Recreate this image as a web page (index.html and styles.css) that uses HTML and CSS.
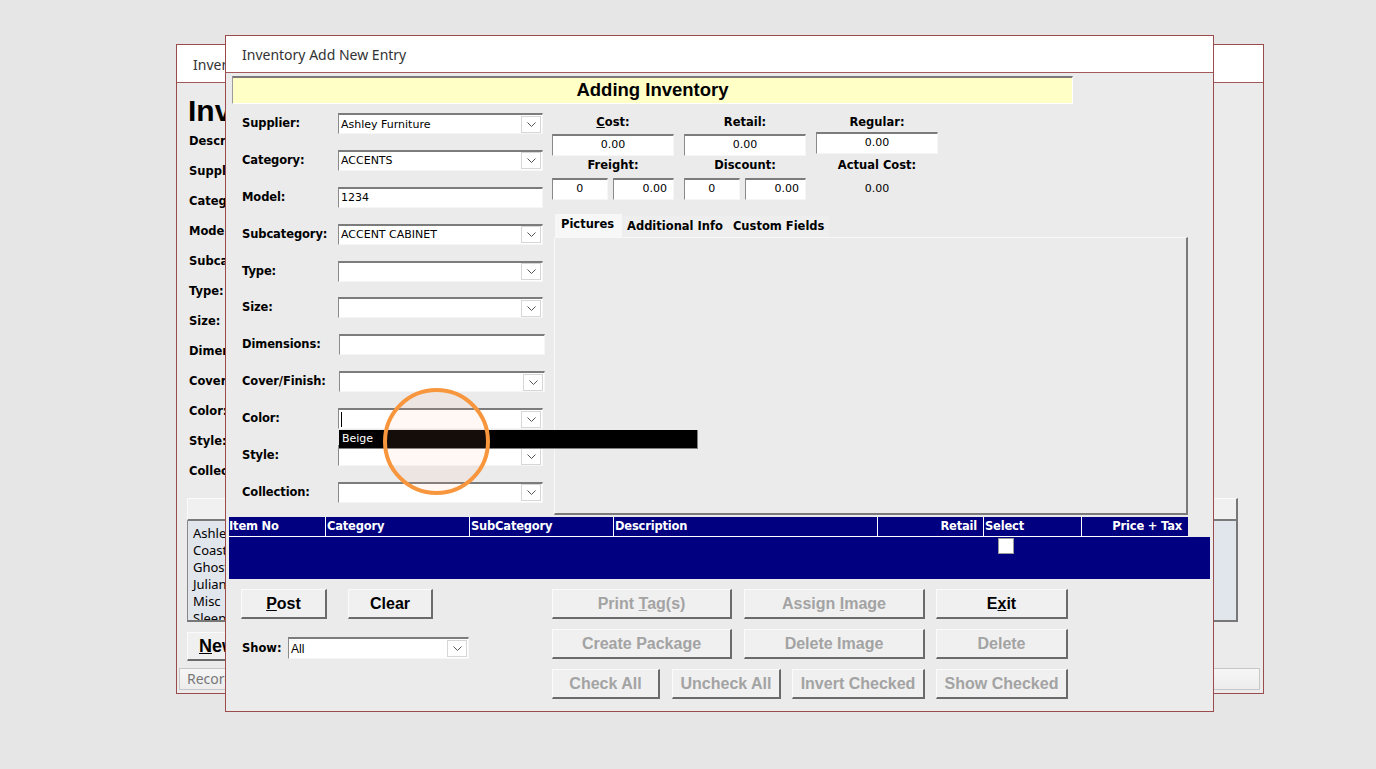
FILE: index.html
```html
<!DOCTYPE html>
<html lang="en">
<head>
    <meta charset="UTF-8">
    <meta name="viewport" content="width=device-width, initial-scale=1.0">
    <title>Inventory Add New Entry</title>
    <link rel="stylesheet" href="styles.css">
</head>
<body>
    <div class="desk">

        <!-- window behind: inventory list -->
        <div class="win back">
            <div class="titlebar">Inventory</div>
            <div class="back-body">
                <div class="big">Inventory</div>
                <div class="back-labels">
                    <div>Description:</div>
                    <div>Supplier:</div>
                    <div>Category:</div>
                    <div>Model:</div>
                    <div>Subcategory:</div>
                    <div>Type:</div>
                    <div>Size:</div>
                    <div>Dimensions:</div>
                    <div>Cover/Finish:</div>
                    <div>Color:</div>
                    <div>Style:</div>
                    <div>Collection:</div>
                </div>
                <div class="back-bar"></div>
                <div class="back-list">
                    <div>Ashley Furniture</div>
                    <div>Coaster</div>
                    <div>Ghost</div>
                    <div>Julian</div>
                    <div>Misc</div>
                    <div>Sleep</div>
                </div>
                <button class="back-new"><u>N</u>ew</button>
                <div class="back-status">Record</div>
            </div>
        </div>

        <!-- front window -->
        <div class="win front">
            <div class="titlebar">Inventory Add New Entry</div>
            <div class="front-body">
                <div class="heading">Adding Inventory</div>

                <div class="main">
                    <div class="fields">
                        <label>Supplier:</label>
                        <div class="combo"><span class="val">Ashley Furniture</span><span class="drop"><svg width="9" height="5" viewBox="0 0 9 5"><polyline points="0.5,0.5 4.5,4.5 8.5,0.5" fill="none" stroke="#555" stroke-width="1"/></svg></span></div>

                        <label>Category:</label>
                        <div class="combo"><span class="val">ACCENTS</span><span class="drop"><svg width="9" height="5" viewBox="0 0 9 5"><polyline points="0.5,0.5 4.5,4.5 8.5,0.5" fill="none" stroke="#555" stroke-width="1"/></svg></span></div>

                        <label>Model:</label>
                        <div class="combo"><span class="val">1234</span></div>

                        <label>Subcategory:</label>
                        <div class="combo"><span class="val">ACCENT CABINET</span><span class="drop"><svg width="9" height="5" viewBox="0 0 9 5"><polyline points="0.5,0.5 4.5,4.5 8.5,0.5" fill="none" stroke="#555" stroke-width="1"/></svg></span></div>

                        <label>Type:</label>
                        <div class="combo"><span class="val"></span><span class="drop"><svg width="9" height="5" viewBox="0 0 9 5"><polyline points="0.5,0.5 4.5,4.5 8.5,0.5" fill="none" stroke="#555" stroke-width="1"/></svg></span></div>

                        <label>Size:</label>
                        <div class="combo"><span class="val"></span><span class="drop"><svg width="9" height="5" viewBox="0 0 9 5"><polyline points="0.5,0.5 4.5,4.5 8.5,0.5" fill="none" stroke="#555" stroke-width="1"/></svg></span></div>

                        <label>Dimensions:</label>
                        <div class="combo shifted"><span class="val"></span></div>

                        <label>Cover/Finish:</label>
                        <div class="combo shifted"><span class="val"></span><span class="drop"><svg width="9" height="5" viewBox="0 0 9 5"><polyline points="0.5,0.5 4.5,4.5 8.5,0.5" fill="none" stroke="#555" stroke-width="1"/></svg></span></div>

                        <label>Color:</label>
                        <div class="combo"><span class="val"><span class="caret"></span></span><span class="drop"><svg width="9" height="5" viewBox="0 0 9 5"><polyline points="0.5,0.5 4.5,4.5 8.5,0.5" fill="none" stroke="#555" stroke-width="1"/></svg></span></div>

                        <label>Style:</label>
                        <div class="combo"><span class="val"></span><span class="drop"><svg width="9" height="5" viewBox="0 0 9 5"><polyline points="0.5,0.5 4.5,4.5 8.5,0.5" fill="none" stroke="#555" stroke-width="1"/></svg></span></div>

                        <label>Collection:</label>
                        <div class="combo"><span class="val"></span><span class="drop"><svg width="9" height="5" viewBox="0 0 9 5"><polyline points="0.5,0.5 4.5,4.5 8.5,0.5" fill="none" stroke="#555" stroke-width="1"/></svg></span></div>
                    </div>

                    <div class="side">
                        <div class="prices">
                            <div class="plabel"><u>C</u>ost:</div>
                            <div class="plabel">Retail:</div>
                            <div class="plabel">Regular:</div>

                            <div class="box">0.00</div>
                            <div class="box">0.00</div>
                            <div class="box raised">0.00</div>

                            <div class="plabel second">Freight:</div>
                            <div class="plabel second">Discount:</div>
                            <div class="plabel second">Actual Cost:</div>

                            <div class="pair"><div class="box">0</div><div class="box right">0.00</div></div>
                            <div class="pair"><div class="box">0</div><div class="box right">0.00</div></div>
                            <div class="plain">0.00</div>
                        </div>

                        <div class="tabs">
                            <div class="tab active">Pictures</div>
                            <div class="tab">Additional Info</div>
                            <div class="tab">Custom Fields</div>
                        </div>
                        <div class="tab-panel"></div>
                    </div>
                </div>

                <div class="grid">
                    <div class="grid-head">
                        <div>Item No</div>
                        <div>Category</div>
                        <div>SubCategory</div>
                        <div>Description</div>
                        <div class="num">Retail</div>
                        <div>Select</div>
                        <div class="num">Price + Tax</div>
                    </div>
                    <div class="grid-body">
                        <span class="check"></span>
                    </div>
                </div>

                <div class="bottom">
                    <div class="left">
                        <div class="btn-row">
                            <button class="btn post"><u>P</u>ost</button>
                            <button class="btn clear">Clear</button>
                        </div>
                        <div class="show">
                            <span class="show-label">Show:</span>
                            <div class="combo show-combo"><span class="val">All</span><span class="drop"><svg width="9" height="5" viewBox="0 0 9 5"><polyline points="0.5,0.5 4.5,4.5 8.5,0.5" fill="none" stroke="#555" stroke-width="1"/></svg></span></div>
                        </div>
                    </div>
                    <div class="actions">
                        <div class="btn-row">
                            <button class="btn off w180">Print <u>T</u>ag(s)</button>
                            <button class="btn off w181">Assign <u>I</u>mage</button>
                            <button class="btn w132">E<u>x</u>it</button>
                        </div>
                        <div class="btn-row">
                            <button class="btn off w180">Create Packa<u>g</u>e</button>
                            <button class="btn off w181">Delete Image</button>
                            <button class="btn off w132">Delete</button>
                        </div>
                        <div class="btn-row">
                            <button class="btn off w108">Check All</button>
                            <button class="btn off w109">Uncheck All</button>
                            <button class="btn off w133">Invert Checked</button>
                            <button class="btn off w132">Show Checked</button>
                        </div>
                    </div>
                </div>
            </div>
        </div>

        <!-- open dropdown of the Color combo -->
        <div class="popup">Beige</div>

        <!-- click highlight -->
        <div class="spot"></div>
    </div>
</body>
</html>
```

FILE: styles.css
```css
* {
    box-sizing: border-box;
}

body {
    margin: 0;
    background: #e6e6e6;
    font-family: 'DejaVu Sans', sans-serif;
    color: #000;
}

.desk {
    position: relative;
    width: 1376px;
    height: 769px;
    overflow: hidden;
}

.win {
    position: absolute;
    background: #ebebeb;
    border: 1px solid #9a4c4c;
}

.titlebar {
    background: #fff;
    border-bottom: 1px solid #a45a5a;
    font-family: 'Noto Sans', sans-serif;
    font-size: 14px;
    color: #333;
    padding-left: 16px;
}

/* ---------- back window ---------- */

.back {
    left: 176px;
    top: 44px;
    width: 1088px;
    height: 650px;
}

.back .titlebar {
    height: 38px;
    line-height: 40px;
}

.back-body {
    padding: 0 25px 0 10px;
}

.big {
    margin-top: 13px;
    margin-left: 1px;
    font-family: 'Liberation Sans', sans-serif;
    font-weight: bold;
    font-size: 30px;
    line-height: 30px;
}

.back-labels {
    padding-left: 2px;
    font-weight: bold;
    font-size: 11.5px;
}

.back-labels div {
    height: 30px;
    line-height: 30px;
}

.back-bar {
    margin-top: 12px;
    height: 23px;
    background: #f0f0f0;
    border-top: 1px solid #fafafa;
    border-left: 1px solid #fafafa;
    border-right: 2px solid #777;
    border-bottom: 2px solid #7a7a7a;
}

.back-list {
    height: 101px;
    padding: 4px 0 0 5px;
    background: #e1e5ec;
    border-left: 1px solid #888;
    border-right: 2px solid #777;
    border-bottom: 2px solid #777;
    font-family: 'Noto Sans', sans-serif;
    font-size: 13px;
    overflow: hidden;
}

.back-list div {
    height: 17px;
    line-height: 17px;
}

.back-new {
    margin-top: 10px;
    width: 90px;
    height: 29px;
    background: #f0f0f0;
    border: none;
    border-top: 1px solid #fafafa;
    border-left: 1px solid #fafafa;
    border-right: 2px solid #6b6b6b;
    border-bottom: 2px solid #6b6b6b;
    font-family: 'Liberation Sans', sans-serif;
    font-weight: bold;
    font-size: 18px;
    text-align: left;
    padding-left: 11px;
}

.back-status {
    margin: 7px -22px 0 -8px;
    height: 22px;
    line-height: 20px;
    padding-left: 7px;
    background: linear-gradient(#f6f6f6, #ececec);
    border: 1px solid #c8c8c8;
    font-family: 'Noto Sans', sans-serif;
    font-size: 14px;
    color: #777;
}

/* ---------- front window ---------- */

.front {
    left: 225px;
    top: 35px;
    width: 989px;
    height: 677px;
}

.front .titlebar {
    height: 37px;
    line-height: 37px;
}

.heading {
    margin: 3px 0 0 6px;
    width: 841px;
    height: 28px;
    background: #ffffc6;
    border-top: 2px solid #7a7a7a;
    border-left: 1px solid #9a9a9a;
    border-right: 1px solid #fff;
    border-bottom: 1px solid #fff;
    text-align: center;
    font-family: 'Liberation Sans', sans-serif;
    font-weight: bold;
    font-size: 18.5px;
    line-height: 24px;
}

.main {
    display: flex;
    align-items: flex-start;
    margin-top: 9px;
    padding-left: 16px;
}

.fields {
    display: grid;
    grid-template-columns: 96px 205px;
    grid-auto-rows: 21px;
    row-gap: 15.9px;
}

.fields label {
    font-weight: bold;
    font-size: 11.5px;
    line-height: 20px;
    letter-spacing: -0.1px;
}

.combo {
    display: flex;
    align-items: center;
    height: 21px;
    background: #fff;
    border-top: 2px solid #7c7c7c;
    border-left: 1px solid #8a8a8a;
    border-right: 1px solid #f6f6f6;
    border-bottom: 1px solid #f6f6f6;
}

.combo.shifted {
    margin-left: 1px;
    margin-right: -2px;
}

.combo .val {
    flex: 1;
    padding-left: 2px;
    font-size: 11px;
    white-space: nowrap;
    overflow: hidden;
    display: flex;
    align-items: center;
}

.caret {
    display: inline-block;
    width: 1px;
    height: 15px;
    background: #000;
}

.combo .drop {
    display: flex;
    align-items: center;
    justify-content: center;
    width: 20px;
    height: 17px;
    margin-right: 1px;
    background: #fff;
    border: 1px solid #d6d6d6;
}

.side {
    margin-left: 9px;
    padding-top: 2px;
    width: 636px;
}

.prices {
    display: grid;
    grid-template-columns: 122px 122px 122px;
    column-gap: 10px;
}

.plabel {
    height: 19px;
    line-height: 15px;
    text-align: center;
    font-weight: bold;
    font-size: 11.5px;
}

.plabel.second {
    height: 22px;
    padding-top: 2px;
}

.box {
    height: 22px;
    background: #fff;
    border-top: 2px solid #7c7c7c;
    border-left: 1px solid #8a8a8a;
    border-right: 1px solid #f6f6f6;
    border-bottom: 1px solid #f6f6f6;
    font-size: 11px;
    line-height: 18px;
    text-align: center;
}

.box.raised {
    margin-top: -2px;
    margin-bottom: 2px;
}

.box.right {
    text-align: right;
    padding-right: 6px;
}

.pair {
    display: flex;
    gap: 5px;
}

.pair .box {
    flex: 1;
}

.plain {
    font-size: 11px;
    line-height: 22px;
    text-align: center;
}

.tabs {
    display: flex;
    align-items: flex-end;
    margin: 14px 0 0 3px;
    height: 23px;
}

.tab {
    height: 21px;
    line-height: 20px;
    padding: 0 5px;
    background: #eeeeee;
    font-weight: bold;
    font-size: 11.5px;
    white-space: nowrap;
}

.tab.active {
    height: 23px;
    line-height: 21px;
    background: #f7f7f7;
    width: 67px;
    padding: 0 0 0 6px;
}

.tab-panel {
    margin-left: 2px;
    width: 634px;
    height: 278px;
    border-top: 1px solid #f8f8f8;
    border-left: 1px solid #f8f8f8;
    border-right: 2px solid #7a7a7a;
    border-bottom: 2px solid #7a7a7a;
}

.grid {
    margin: 2px 0 0 3px;
}

.grid-head {
    display: grid;
    grid-template-columns: 96px 144px 144px 264px 106px 98px 107px;
    width: 959px;
    height: 20px;
    background: #000080;
    border-bottom: 1px solid #fff;
    color: #fff;
    font-weight: bold;
    font-size: 11.5px;
    line-height: 18px;
}

.grid-head div {
    padding: 0 1px;
    border-left: 1px solid #fff;
    white-space: nowrap;
    letter-spacing: -0.2px;
}

.grid-head div:first-child {
    border-left: none;
    padding-left: 0;
}

.grid-head .num {
    text-align: right;
    padding-right: 6px;
}

.grid-body {
    width: 981px;
    height: 42px;
    background: #000080;
    padding: 1px 0 0 769px;
}

.check {
    display: block;
    width: 16px;
    height: 16px;
    background: #fff;
    border: 1px solid #999;
}

.bottom {
    display: flex;
    margin-top: 10px;
    padding-left: 15px;
}

.left {
    width: 228px;
}

.btn-row {
    display: flex;
}

.btn {
    height: 30px;
    padding: 0;
    background: #f0f0f0;
    border: none;
    border-top: 1px solid #fbfbfb;
    border-left: 1px solid #fbfbfb;
    border-right: 2px solid #6b6b6b;
    border-bottom: 2px solid #6b6b6b;
    font-family: 'Liberation Sans', sans-serif;
    font-weight: bold;
    font-size: 16px;
    color: #000;
}

.btn.off {
    color: #a3a3a3;
}

.post {
    width: 86px;
}

.clear {
    width: 85px;
    margin-left: 21px;
}

.show {
    display: flex;
    align-items: center;
    margin-top: 18px;
}

.show-label {
    width: 47px;
    padding-left: 1px;
    font-weight: bold;
    font-size: 11.5px;
}

.show-combo {
    width: 181px;
    height: 22px;
}

.show-combo .val {
    font-family: 'Liberation Sans', sans-serif;
    font-size: 12px;
}

.actions {
    display: flex;
    flex-direction: column;
    gap: 10px;
    margin-left: 83px;
}

.actions .btn-row {
    gap: 11px;
}

.actions .btn-row .btn:first-child {
    margin-right: 1px;
}

.w108 { width: 108px; }
.w109 { width: 109px; }
.w132 { width: 132px; }
.w133 { width: 133px; }
.w180 { width: 180px; }
.w181 { width: 181px; }

/* ---------- overlays ---------- */

.popup {
    position: absolute;
    left: 339px;
    top: 430px;
    width: 359px;
    height: 19px;
    background: #000;
    border-right: 1px solid #808080;
    border-bottom: 1px solid #808080;
    color: #fff;
    font-size: 11px;
    line-height: 18px;
    padding-left: 3px;
}

.spot {
    position: absolute;
    left: 383px;
    top: 388px;
    width: 107px;
    height: 107px;
    border-radius: 50%;
    border: 4px solid #f7963c;
    background: rgba(255, 170, 110, 0.08);
}
```
